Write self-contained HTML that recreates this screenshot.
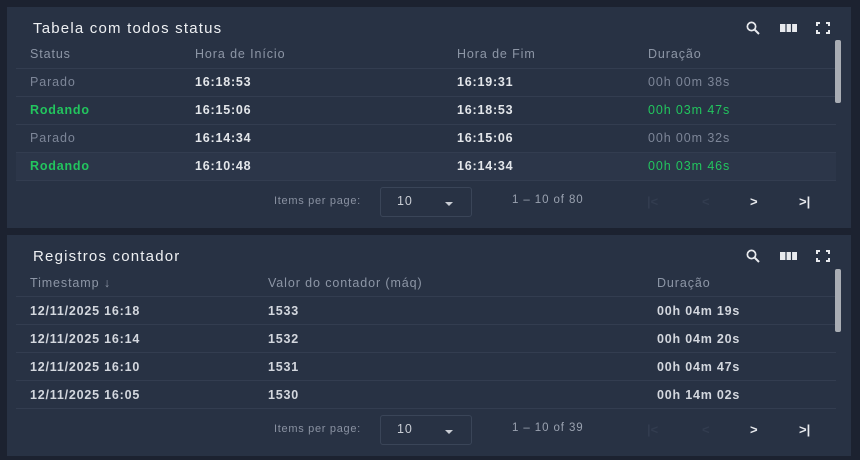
<!DOCTYPE html>
<html><head><meta charset="utf-8"><style>
*{margin:0;padding:0;box-sizing:border-box}
body{width:860px;height:460px;background:#1c2230;font-family:"Liberation Sans",sans-serif;position:relative;overflow:hidden}
.card{position:absolute;left:7px;width:844px;background:#283244;}
.t{position:absolute;left:26px;top:13px;font-size:15px;letter-spacing:1.2px;color:#eef0f3}
.ic{position:absolute;top:12px}
.tx{position:absolute;font-size:12.5px;white-space:nowrap;letter-spacing:0.9px}
.h{color:#8d96a6}
.b{color:#e3e6ea;font-weight:bold;letter-spacing:0.8px}
.g{color:#22c55e;font-weight:bold;letter-spacing:0.8px}
.gn{color:#22c55e}
.p{color:#7d8698}
.line{position:absolute;left:9px;width:820px;height:1px;background:#333d50}
.sb{position:absolute;left:828px;width:6px;height:63px;background:#a9adb4;border-radius:2px}
.sel{position:absolute;left:373px;width:92px;height:30px;border:1px solid #3a4558;border-radius:3px}
.pg{position:absolute;font-size:13px;font-weight:bold}
.c{color:#d3d7de}
</style></head><body>
<div class="card" style="top:7px;height:221px">
<div class="t">Tabela com todos status</div>
<svg class="ic" style="left:737px" width="18" height="18" viewBox="0 0 24 24"><circle cx="10" cy="10" r="5.5" fill="none" stroke="#e8eaee" stroke-width="2.3"/><path d="M14 14l6 6" stroke="#e8eaee" stroke-width="2.6"/></svg>
<svg class="ic" style="left:773px;top:14px" width="18" height="14"><rect x="0" y="3" width="17" height="8" fill="#e8eaee"/><path d="M6 3v8M11.5 3v8" stroke="#283244" stroke-width="1.2"/></svg>
<svg class="ic" style="left:809px;top:15px" width="14" height="12" viewBox="0 0 14 12" fill="none" stroke="#e8eaee" stroke-width="2"><path d="M1 4V1h3M10 1h3v3M13 8v3h-3M4 11H1V8"/></svg>
<div class="tx h" style="left:23px;top:40px">Status</div>
<div class="tx h" style="left:188px;top:40px">Hora de Início</div>
<div class="tx h" style="left:450px;top:40px">Hora de Fim</div>
<div class="tx h" style="left:641px;top:40px">Duração</div>
<div class="line" style="top:61px"></div>
<div class="tx p" style="left:23px;top:68px">Parado</div><div class="tx b" style="left:188px;top:68px">16:18:53</div><div class="tx b" style="left:450px;top:68px">16:19:31</div><div class="tx p" style="left:641px;top:68px">00h 00m 38s</div>
<div class="line" style="top:89px"></div>
<div class="tx g" style="left:23px;top:96px">Rodando</div><div class="tx b" style="left:188px;top:96px">16:15:06</div><div class="tx b" style="left:450px;top:96px">16:18:53</div><div class="tx gn" style="left:641px;top:96px">00h 03m 47s</div>
<div class="line" style="top:117px"></div>
<div class="tx p" style="left:23px;top:124px">Parado</div><div class="tx b" style="left:188px;top:124px">16:14:34</div><div class="tx b" style="left:450px;top:124px">16:15:06</div><div class="tx p" style="left:641px;top:124px">00h 00m 32s</div>
<div class="line" style="top:145px"></div>
<div style="position:absolute;left:9px;top:146px;width:820px;height:27px;background:#2c3649"></div>
<div class="tx g" style="left:23px;top:152px">Rodando</div><div class="tx b" style="left:188px;top:152px">16:10:48</div><div class="tx b" style="left:450px;top:152px">16:14:34</div><div class="tx gn" style="left:641px;top:152px">00h 03m 46s</div>
<div class="line" style="top:173px"></div>
<div class="sb" style="top:33px"></div>
<div class="tx" style="left:267px;top:188px;font-size:11px;color:#8a92a2;letter-spacing:0.7px">Items per page:</div>
<div class="sel" style="top:180px"></div>
<div class="tx" style="left:390px;top:187px;color:#c9cdd4">10</div>
<div style="position:absolute;left:438px;top:195px;border:4px solid transparent;border-top:4px solid #c9cdd4"></div>
<div class="tx" style="left:505px;top:187px;color:#9aa2b0;font-size:11.5px">1 – 10 of 80</div>
<div class="pg" style="left:640px;top:187px;color:#323c4f">|&lt;</div>
<div class="pg" style="left:695px;top:187px;color:#323c4f">&lt;</div>
<div class="pg" style="left:743px;top:187px;color:#e8eaee">&gt;</div>
<div class="pg" style="left:792px;top:187px;color:#e8eaee">&gt;|</div>
</div>

<div class="card" style="top:235px;height:221px">
<div class="t" style="top:13px">Registros contador</div>
<svg class="ic" style="left:737px" width="18" height="18" viewBox="0 0 24 24"><circle cx="10" cy="10" r="5.5" fill="none" stroke="#e8eaee" stroke-width="2.3"/><path d="M14 14l6 6" stroke="#e8eaee" stroke-width="2.6"/></svg>
<svg class="ic" style="left:773px;top:14px" width="18" height="14"><rect x="0" y="3" width="17" height="8" fill="#e8eaee"/><path d="M6 3v8M11.5 3v8" stroke="#283244" stroke-width="1.2"/></svg>
<svg class="ic" style="left:809px;top:15px" width="14" height="12" viewBox="0 0 14 12" fill="none" stroke="#e8eaee" stroke-width="2"><path d="M1 4V1h3M10 1h3v3M13 8v3h-3M4 11H1V8"/></svg>
<div class="tx h" style="left:23px;top:41px">Timestamp <span style="font-weight:bold">↓</span></div>
<div class="tx h" style="left:261px;top:41px">Valor do contador (máq)</div>
<div class="tx h" style="left:650px;top:41px">Duração</div>
<div class="line" style="top:61px"></div>
<div class="tx b c" style="left:23px;top:69px">12/11/2025 16:18</div><div class="tx b c" style="left:261px;top:69px">1533</div><div class="tx b c" style="left:650px;top:69px">00h 04m 19s</div>
<div class="line" style="top:89px"></div>
<div class="tx b c" style="left:23px;top:97px">12/11/2025 16:14</div><div class="tx b c" style="left:261px;top:97px">1532</div><div class="tx b c" style="left:650px;top:97px">00h 04m 20s</div>
<div class="line" style="top:117px"></div>
<div class="tx b c" style="left:23px;top:125px">12/11/2025 16:10</div><div class="tx b c" style="left:261px;top:125px">1531</div><div class="tx b c" style="left:650px;top:125px">00h 04m 47s</div>
<div class="line" style="top:145px"></div>
<div class="tx b c" style="left:23px;top:153px">12/11/2025 16:05</div><div class="tx b c" style="left:261px;top:153px">1530</div><div class="tx b c" style="left:650px;top:153px">00h 14m 02s</div>
<div class="line" style="top:173px"></div>
<div class="sb" style="top:34px"></div>
<div class="tx" style="left:267px;top:188px;font-size:11px;color:#8a92a2;letter-spacing:0.7px">Items per page:</div>
<div class="sel" style="top:180px"></div>
<div class="tx" style="left:390px;top:187px;color:#c9cdd4">10</div>
<div style="position:absolute;left:438px;top:195px;border:4px solid transparent;border-top:4px solid #c9cdd4"></div>
<div class="tx" style="left:505px;top:187px;color:#9aa2b0;font-size:11.5px">1 – 10 of 39</div>
<div class="pg" style="left:640px;top:187px;color:#323c4f">|&lt;</div>
<div class="pg" style="left:695px;top:187px;color:#323c4f">&lt;</div>
<div class="pg" style="left:743px;top:187px;color:#e8eaee">&gt;</div>
<div class="pg" style="left:792px;top:187px;color:#e8eaee">&gt;|</div>
</div>
</body></html>
